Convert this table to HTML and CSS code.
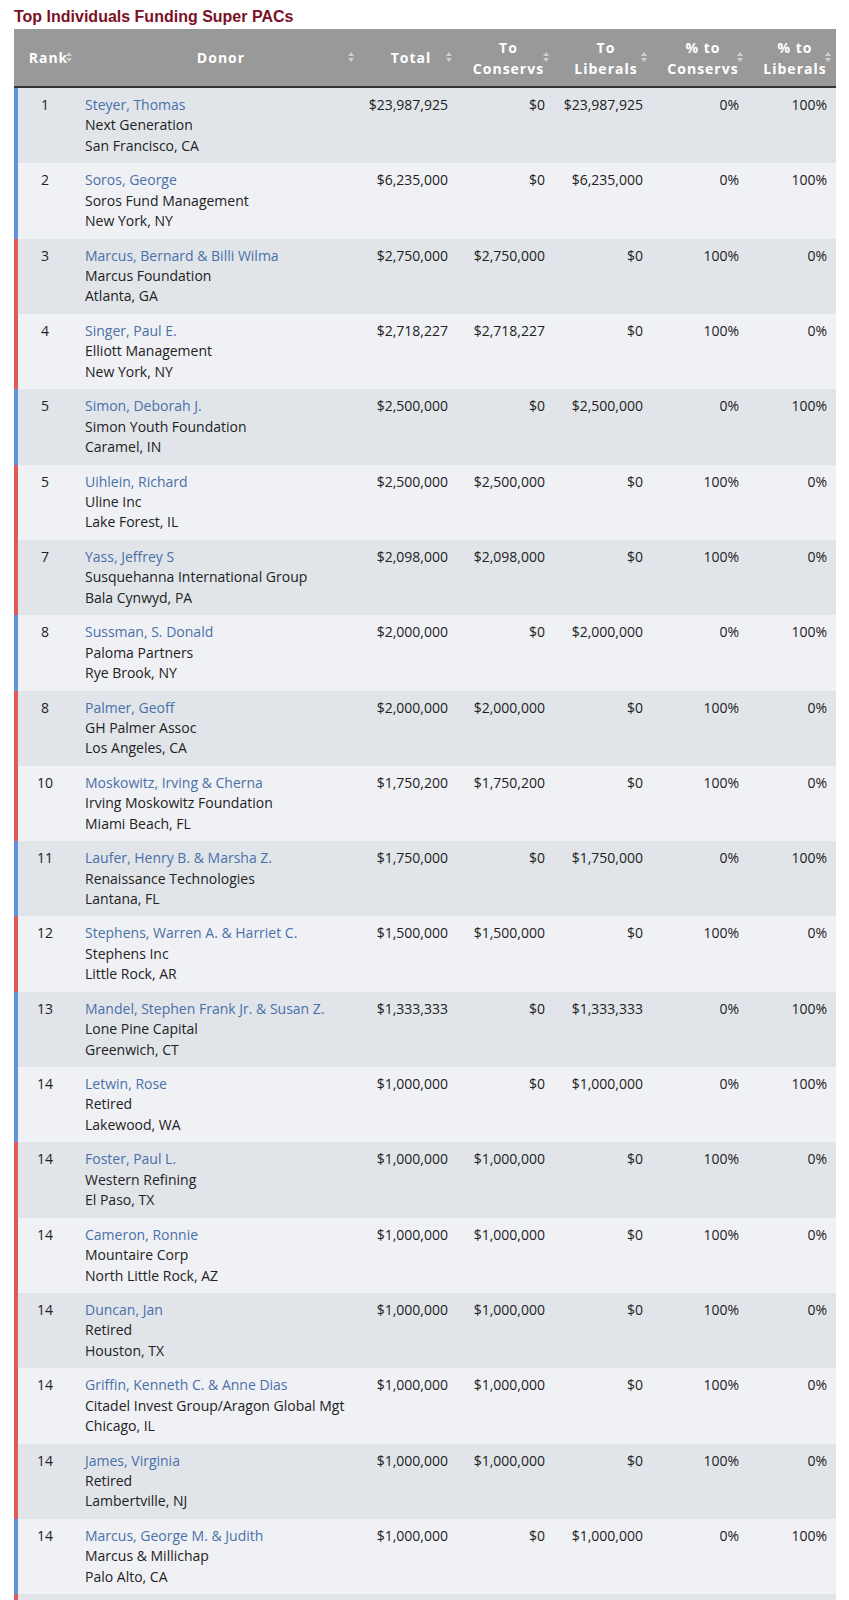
FILE: index.html
```html
<!DOCTYPE html>
<html lang="en">
<head>
<meta charset="utf-8">
<title>Top Individuals Funding Super PACs</title>
<link rel="stylesheet" href="styles.css">
</head>
<body>
<div class="wrap">
  <h1 class="title">Top Individuals Funding Super PACs</h1>
  <table class="donors">
    <colgroup>
      <col class="c-rank"><col class="c-donor"><col class="c-total"><col class="c-cons"><col class="c-lib"><col class="c-pcons"><col class="c-plib">
    </colgroup>
    <thead>
      <tr>
        <th>Rank<svg class="sort" viewBox="0 0 6 10"><path d="M3 0L6 4H0Z"/><path d="M3 10L0 6H6Z"/></svg></th>
        <th>Donor<svg class="sort" viewBox="0 0 6 10"><path d="M3 0L6 4H0Z"/><path d="M3 10L0 6H6Z"/></svg></th>
        <th>Total<svg class="sort" viewBox="0 0 6 10"><path d="M3 0L6 4H0Z"/><path d="M3 10L0 6H6Z"/></svg></th>
        <th>To<br>Conservs<svg class="sort" viewBox="0 0 6 10"><path d="M3 0L6 4H0Z"/><path d="M3 10L0 6H6Z"/></svg></th>
        <th>To<br>Liberals<svg class="sort" viewBox="0 0 6 10"><path d="M3 0L6 4H0Z"/><path d="M3 10L0 6H6Z"/></svg></th>
        <th>% to<br>Conservs<svg class="sort" viewBox="0 0 6 10"><path d="M3 0L6 4H0Z"/><path d="M3 10L0 6H6Z"/></svg></th>
        <th>% to<br>Liberals<svg class="sort" viewBox="0 0 6 10"><path d="M3 0L6 4H0Z"/><path d="M3 10L0 6H6Z"/></svg></th>
      </tr>
    </thead>
    <tbody>
      <tr class="lib"><td class="rank">1</td><td class="donor"><a href="#">Steyer, Thomas</a><br>Next Generation<br>San Francisco, CA</td><td class="num">$23,987,925</td><td class="num">$0</td><td class="num">$23,987,925</td><td class="num">0%</td><td class="num">100%</td></tr>
      <tr class="lib"><td class="rank">2</td><td class="donor"><a href="#">Soros, George</a><br>Soros Fund Management<br>New York, NY</td><td class="num">$6,235,000</td><td class="num">$0</td><td class="num">$6,235,000</td><td class="num">0%</td><td class="num">100%</td></tr>
      <tr class="con"><td class="rank">3</td><td class="donor"><a href="#">Marcus, Bernard &amp; Billi Wilma</a><br>Marcus Foundation<br>Atlanta, GA</td><td class="num">$2,750,000</td><td class="num">$2,750,000</td><td class="num">$0</td><td class="num">100%</td><td class="num">0%</td></tr>
      <tr class="con"><td class="rank">4</td><td class="donor"><a href="#">Singer, Paul E.</a><br>Elliott Management<br>New York, NY</td><td class="num">$2,718,227</td><td class="num">$2,718,227</td><td class="num">$0</td><td class="num">100%</td><td class="num">0%</td></tr>
      <tr class="lib"><td class="rank">5</td><td class="donor"><a href="#">Simon, Deborah J.</a><br>Simon Youth Foundation<br>Caramel, IN</td><td class="num">$2,500,000</td><td class="num">$0</td><td class="num">$2,500,000</td><td class="num">0%</td><td class="num">100%</td></tr>
      <tr class="con"><td class="rank">5</td><td class="donor"><a href="#">Uihlein, Richard</a><br>Uline Inc<br>Lake Forest, IL</td><td class="num">$2,500,000</td><td class="num">$2,500,000</td><td class="num">$0</td><td class="num">100%</td><td class="num">0%</td></tr>
      <tr class="con"><td class="rank">7</td><td class="donor"><a href="#">Yass, Jeffrey S</a><br>Susquehanna International Group<br>Bala Cynwyd, PA</td><td class="num">$2,098,000</td><td class="num">$2,098,000</td><td class="num">$0</td><td class="num">100%</td><td class="num">0%</td></tr>
      <tr class="lib"><td class="rank">8</td><td class="donor"><a href="#">Sussman, S. Donald</a><br>Paloma Partners<br>Rye Brook, NY</td><td class="num">$2,000,000</td><td class="num">$0</td><td class="num">$2,000,000</td><td class="num">0%</td><td class="num">100%</td></tr>
      <tr class="con"><td class="rank">8</td><td class="donor"><a href="#">Palmer, Geoff</a><br>GH Palmer Assoc<br>Los Angeles, CA</td><td class="num">$2,000,000</td><td class="num">$2,000,000</td><td class="num">$0</td><td class="num">100%</td><td class="num">0%</td></tr>
      <tr class="con"><td class="rank">10</td><td class="donor"><a href="#">Moskowitz, Irving &amp; Cherna</a><br>Irving Moskowitz Foundation<br>Miami Beach, FL</td><td class="num">$1,750,200</td><td class="num">$1,750,200</td><td class="num">$0</td><td class="num">100%</td><td class="num">0%</td></tr>
      <tr class="lib"><td class="rank">11</td><td class="donor"><a href="#">Laufer, Henry B. &amp; Marsha Z.</a><br>Renaissance Technologies<br>Lantana, FL</td><td class="num">$1,750,000</td><td class="num">$0</td><td class="num">$1,750,000</td><td class="num">0%</td><td class="num">100%</td></tr>
      <tr class="con"><td class="rank">12</td><td class="donor"><a href="#">Stephens, Warren A. &amp; Harriet C.</a><br>Stephens Inc<br>Little Rock, AR</td><td class="num">$1,500,000</td><td class="num">$1,500,000</td><td class="num">$0</td><td class="num">100%</td><td class="num">0%</td></tr>
      <tr class="lib"><td class="rank">13</td><td class="donor"><a href="#">Mandel, Stephen Frank Jr. &amp; Susan Z.</a><br>Lone Pine Capital<br>Greenwich, CT</td><td class="num">$1,333,333</td><td class="num">$0</td><td class="num">$1,333,333</td><td class="num">0%</td><td class="num">100%</td></tr>
      <tr class="lib"><td class="rank">14</td><td class="donor"><a href="#">Letwin, Rose</a><br>Retired<br>Lakewood, WA</td><td class="num">$1,000,000</td><td class="num">$0</td><td class="num">$1,000,000</td><td class="num">0%</td><td class="num">100%</td></tr>
      <tr class="con"><td class="rank">14</td><td class="donor"><a href="#">Foster, Paul L.</a><br>Western Refining<br>El Paso, TX</td><td class="num">$1,000,000</td><td class="num">$1,000,000</td><td class="num">$0</td><td class="num">100%</td><td class="num">0%</td></tr>
      <tr class="con"><td class="rank">14</td><td class="donor"><a href="#">Cameron, Ronnie</a><br>Mountaire Corp<br>North Little Rock, AZ</td><td class="num">$1,000,000</td><td class="num">$1,000,000</td><td class="num">$0</td><td class="num">100%</td><td class="num">0%</td></tr>
      <tr class="con"><td class="rank">14</td><td class="donor"><a href="#">Duncan, Jan</a><br>Retired<br>Houston, TX</td><td class="num">$1,000,000</td><td class="num">$1,000,000</td><td class="num">$0</td><td class="num">100%</td><td class="num">0%</td></tr>
      <tr class="con"><td class="rank">14</td><td class="donor"><a href="#">Griffin, Kenneth C. &amp; Anne Dias</a><br>Citadel Invest Group/Aragon Global Mgt<br>Chicago, IL</td><td class="num">$1,000,000</td><td class="num">$1,000,000</td><td class="num">$0</td><td class="num">100%</td><td class="num">0%</td></tr>
      <tr class="con"><td class="rank">14</td><td class="donor"><a href="#">James, Virginia</a><br>Retired<br>Lambertville, NJ</td><td class="num">$1,000,000</td><td class="num">$1,000,000</td><td class="num">$0</td><td class="num">100%</td><td class="num">0%</td></tr>
      <tr class="lib"><td class="rank">14</td><td class="donor"><a href="#">Marcus, George M. &amp; Judith</a><br>Marcus &amp; Millichap<br>Palo Alto, CA</td><td class="num">$1,000,000</td><td class="num">$0</td><td class="num">$1,000,000</td><td class="num">0%</td><td class="num">100%</td></tr>
      <tr class="con"><td class="rank">14</td><td class="donor"><a href="#">Ricketts, Joe &amp; Marlene</a><br>TD Ameritrade<br>Omaha, NE</td><td class="num">$1,000,000</td><td class="num">$1,000,000</td><td class="num">$0</td><td class="num">100%</td><td class="num">0%</td></tr>
    </tbody>
  </table>
</div>
</body>
</html>
```

FILE: styles.css
```css
body {
  margin: 8px;
  background: #ffffff;
  font-family: "Open Sans", "Noto Sans", sans-serif;
  font-size: 14px;
  color: #222222;
}

.wrap {
  padding-left: 6px;
}

.title {
  margin: 0 0 3px;
  font-family: "Liberation Sans", Arial, sans-serif;
  font-size: 16px;
  line-height: 18px;
  font-weight: bold;
  color: #7b1126;
}

.donors {
  width: 822px;
  table-layout: fixed;
  border-collapse: separate;
  border-spacing: 0;
}

.c-rank { width: 63px; }
.c-donor { width: 282px; }
.c-total { width: 98px; }
.c-cons { width: 97px; }
.c-lib { width: 98px; }
.c-pcons { width: 96px; }
.c-plib { width: 88px; }

.donors th {
  position: relative;
  background: #999999;
  color: #ffffff;
  font-weight: bold;
  font-size: 14px;
  letter-spacing: 1px;
  line-height: 21px;
  text-align: center;
  vertical-align: middle;
  padding: 7.5px 4px 7.5px 10px;
  border-bottom: 2px solid #333333;
}

.sort {
  position: absolute;
  right: 5px;
  top: 50%;
  width: 6px;
  height: 10px;
  margin-top: -6px;
  fill: #cfcfcf;
}

.donors td {
  vertical-align: top;
  line-height: 20.4px;
  padding: 7px 9px 7.1px 8px;
  white-space: nowrap;
}

.donors tbody tr:nth-child(odd) td { background: #e1e5ea; }
.donors tbody tr:nth-child(even) td { background: #f0f1f5; }

.donors td.rank {
  text-align: center;
  padding-left: 4px;
  padding-right: 5px;
}

.lib td.rank { box-shadow: inset 4px 0 0 #5f93e0; }
.con td.rank { box-shadow: inset 4px 0 0 #e05a5a; }

.donors td.num {
  text-align: right;
}

.donor a {
  color: #4a70a8;
  text-decoration: none;
}
```
